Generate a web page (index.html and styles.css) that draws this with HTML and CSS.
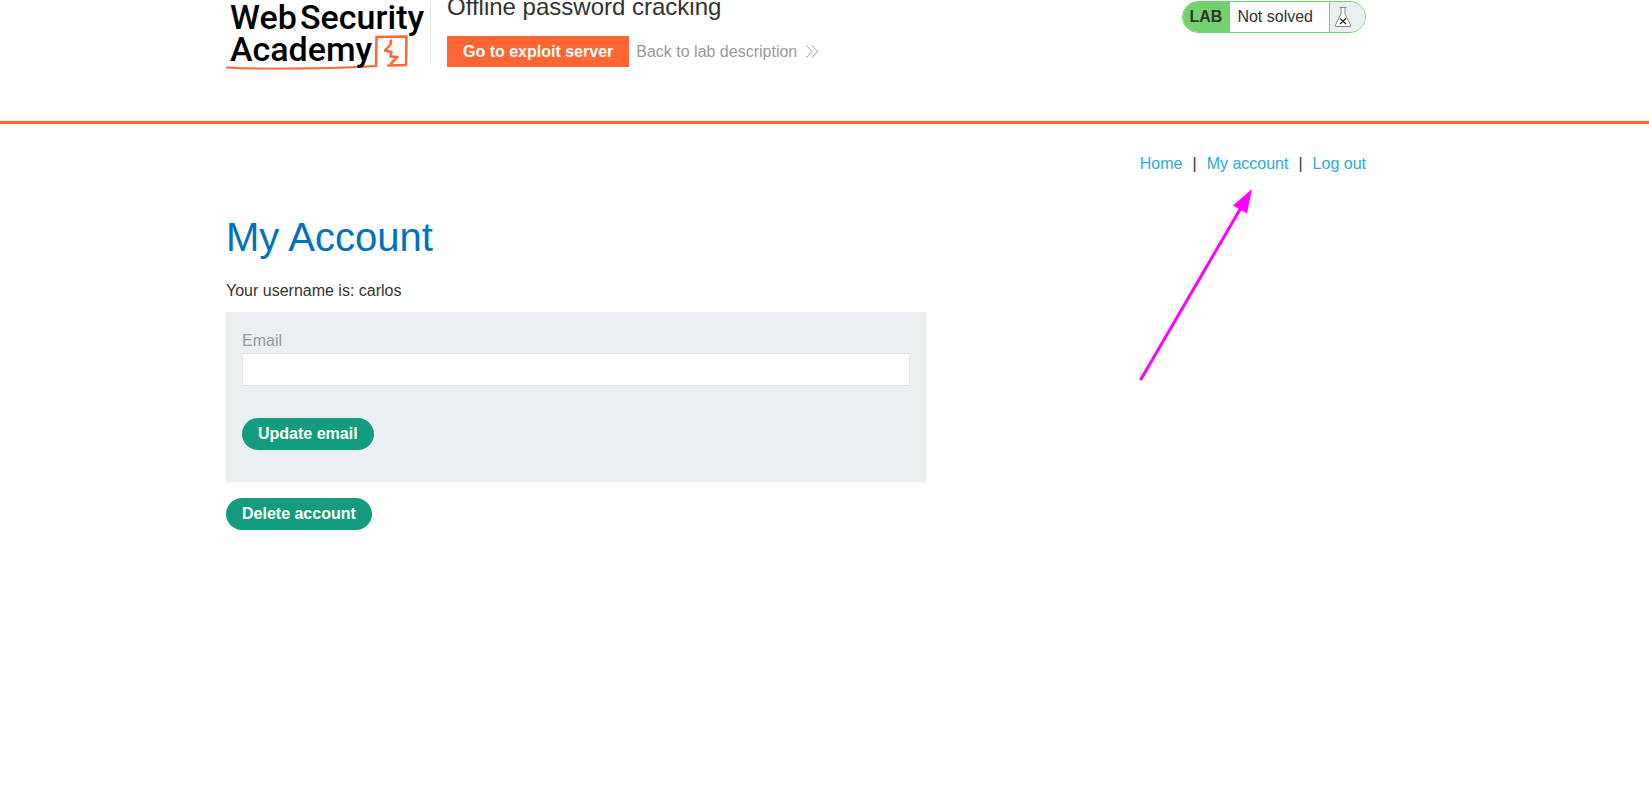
FILE: index.html
```html
<!DOCTYPE html>
<html lang="en">
<head>
<meta charset="utf-8">
<title>Offline password cracking</title>
<link rel="stylesheet" href="styles.css">
</head>
<body>
<header class="lab-header">
  <div class="container lab-header-row">
    <svg class="logo" viewBox="0 0 200 72" role="img" aria-label="Web Security Academy">
      <g class="logo-line">
        <path d="M1 67.500 Q24 69 70 68.500 T150 66" stroke-width="2"/>
        <path d="M150 66 L150.500 37 L180.500 36.500 L180 65 L162 65.500" stroke-width="2.500"/>
        <path d="M165 40.500 L164.500 44.500 L159 50.500 L165.500 52 L164.500 56.500 L171.500 57 L165 63.500" stroke-width="2.500"/>
      </g>
      <g class="logo-text">
        <text x="4" y="29">Web</text>
        <text x="74" y="29">Security</text>
        <text x="4" y="61">Academy</text>
      </g>
    </svg>
    <div class="title-block">
      <h2 class="lab-title">Offline password cracking</h2>
      <div class="lab-links">
        <a class="button-orange" href="#exploit">Go to exploit server</a>
        <a class="link-back" href="#lab">Back to lab description
          <svg class="chevrons" viewBox="0 0 12 13"><path d="M0.500 0.500 L6 6.500 L0.500 12.500 M6 0.500 L11.500 6.500 L6 12.500"/></svg>
        </a>
      </div>
    </div>
    <div class="lab-status">
      <span class="status-tag">LAB</span>
      <span class="status-text">Not solved</span>
      <span class="status-icon">
        <svg class="flask" viewBox="0 0 16 20"><path class="glass" d="M4.500 0.500 H11.500 M6 0.500 V7 L0.500 18 V19.500 H15.500 V18 L10 7 V0.500"/><path class="cross" d="M5 11.500 L11 17 M11 11.500 L5 17"/></svg>
      </span>
    </div>
  </div>
</header>
<main class="container">
  <nav class="top-links">
    <a href="#home">Home</a><span>|</span><a href="#account">My account</a><span>|</span><a href="#logout">Log out</a>
    <svg class="arrow" viewBox="0 0 120 200"><path class="shaft" d="M4.500 194 L106 20"/><path class="head" d="M116 3 L97 19.500 L111 27.500 Z"/></svg>
  </nav>
  <h1>My Account</h1>
  <p class="username">Your username is: carlos</p>
  <form class="login-form">
    <label for="email">Email</label>
    <input id="email" type="email" name="email">
    <button class="button" type="button">Update email</button>
  </form>
  <button class="button" type="button">Delete account</button>
</main>
</body>
</html>
```
FILE: styles.css
```css
* {
  box-sizing: border-box;
}

body {
  margin: 0;
  background: #fff;
  color: #333332;
  font: 16px/20px "Liberation Sans", Arial, sans-serif;
}

a {
  color: #29abe2;
  text-decoration: none;
}

.container {
  max-width: 1140px;
  margin-left: 226px;
}

.lab-header {
  height: 124px;
  border-bottom: 3px solid #ff6633;
}

.lab-header-row {
  display: flex;
  align-items: flex-start;
}

.logo {
  flex: none;
  width: 200px;
  height: 72px;
}

.logo-line {
  fill: none;
  stroke: #ff6633;
  stroke-linecap: round;
  stroke-linejoin: round;
}

.logo-text {
  fill: #000;
  font: 500 34px Roboto, sans-serif;
}

.title-block {
  min-height: 63px;
  margin-left: 4px;
  padding-left: 16px;
  border-left: 1px solid #e5e5e5;
}

.lab-title {
  margin: 0 0 22px;
  font-size: 24px;
  font-weight: 400;
  line-height: 14px;
}

.lab-links {
  display: flex;
  align-items: center;
  gap: 7px;
  margin-bottom: -5px;
}

.button-orange {
  padding: 0 16px;
  background: #ff6633;
  color: #fff;
  font-weight: 700;
  line-height: 31px;
}

.link-back {
  display: flex;
  align-items: center;
  gap: 9px;
  color: #999;
}

.chevrons {
  width: 12px;
  height: 13px;
  fill: none;
  stroke: #999;
}

.lab-status {
  display: flex;
  height: 32px;
  margin: 1px 0 0 auto;
  overflow: hidden;
  border: 1px solid #73d16e;
  border-radius: 16px;
  line-height: 30px;
}

.status-tag {
  padding: 0 8px 0 7px;
  background: #73d16e;
  font-weight: 700;
}

.status-text {
  padding: 0 16px 0 7px;
}

.status-icon {
  display: flex;
  align-items: center;
  width: 36px;
  padding-left: 5px;
  border-left: 1px solid #73d16e;
  background: #eaeff2;
}

.flask {
  width: 16px;
  height: 20px;
  fill: none;
}

.glass {
  fill: #fff;
  stroke: #888;
}

.cross {
  stroke: #333332;
  stroke-width: 1.5;
}

.top-links {
  position: relative;
  display: flex;
  justify-content: flex-end;
  gap: 10px;
  padding-top: 30px;
}

.arrow {
  position: absolute;
  top: 62px;
  right: 110px;
  width: 120px;
  height: 200px;
}

.shaft {
  stroke: #f0f;
  stroke-width: 3;
}

.head {
  fill: #f0f;
}

h1 {
  margin: 39px 0 20px;
  color: #0071bc;
  font-size: 40px;
  font-weight: 400;
  line-height: 48px;
}

.username {
  margin: 0 0 11px;
}

.login-form {
  max-width: 700px;
  margin-bottom: 16px;
  padding: 16px 16px 32px;
  background: #eaeff2;
}

.login-form label {
  display: block;
  color: #999;
  line-height: 25px;
}

.login-form input {
  display: block;
  width: 100%;
  height: 33px;
  margin-bottom: 32px;
  padding: 0 8px;
  border: 1px solid #e4e4e4;
  background: #fff;
  font: inherit;
}

.button {
  display: block;
  padding: 0 16px;
  border: 0;
  border-radius: 16px;
  background: #159c80;
  color: #fff;
  font: 700 16px/32px "Liberation Sans", Arial, sans-serif;
}
```
